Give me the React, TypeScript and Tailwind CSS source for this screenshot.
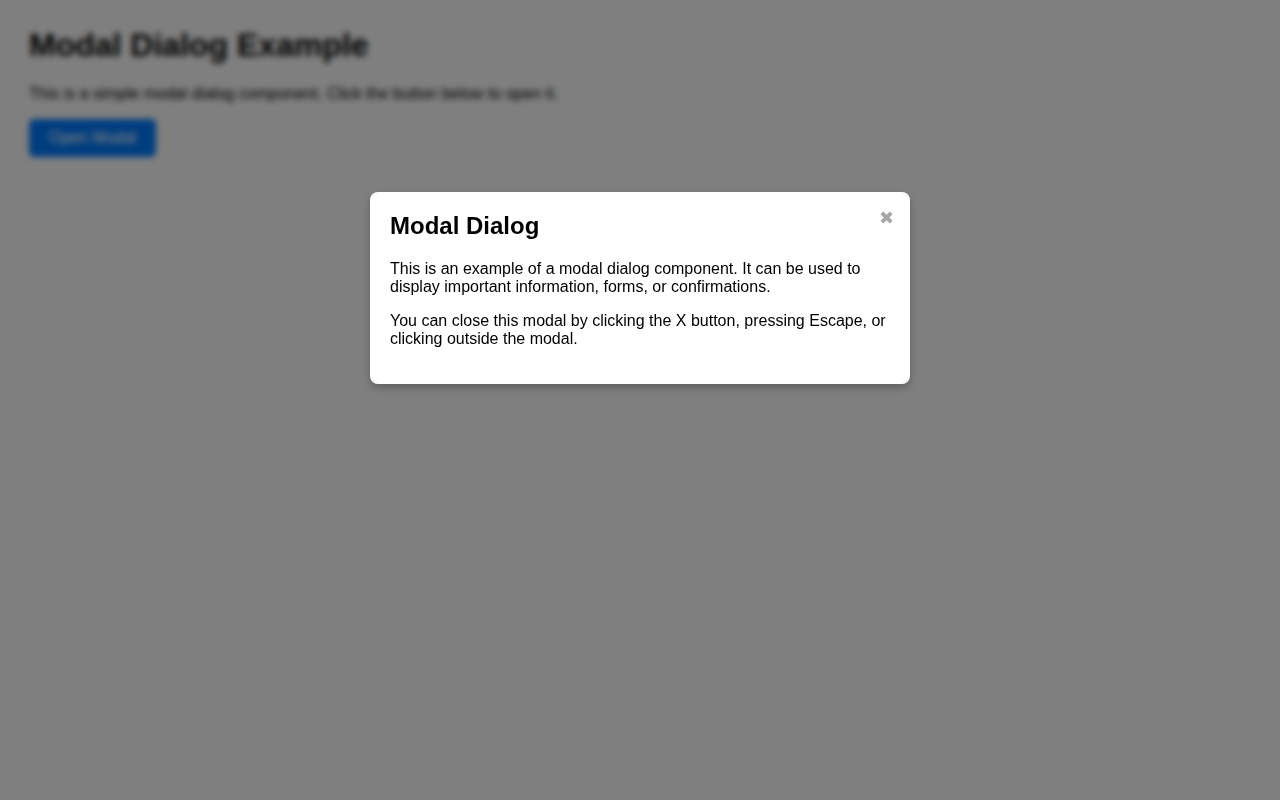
import React, { useEffect, useState } from 'react';

const sans = { fontFamily: '"Liberation Sans", Arial, sans-serif' };

export default function App() {
  const [open, setOpen] = useState(true);

  useEffect(() => {
    const onKey = (e: KeyboardEvent) => {
      if (e.key === 'Escape') setOpen(false);
    };
    window.addEventListener('keydown', onKey);
    return () => window.removeEventListener('keydown', onKey);
  }, []);

  return (
    <div className="relative min-h-screen bg-white text-black" style={sans}>
      {/* Page content */}
      <div className="px-[29px] pt-[27px]">
        <h1 className="mb-[21px] text-[32px] font-bold leading-[normal]">Modal Dialog Example</h1>
        <p className="mb-4 text-base leading-[normal]">
          This is a simple modal dialog component. Click the button below to open it.
        </p>
        <button
          onClick={() => setOpen(true)}
          className="rounded-[5px] bg-[#007bff] px-5 py-[10px] text-base leading-[normal] text-white"
        >
          Open Modal
        </button>
      </div>

      {/* Overlay + dialog */}
      {open && (
        <div
          className="fixed inset-0 flex items-start justify-center bg-black/50 pt-[192px] backdrop-blur-[3px]"
          onClick={() => setOpen(false)}
        >
          <div
            className="relative w-[540px] rounded-lg bg-white p-5 shadow-[0_4px_8px_rgba(0,0,0,0.25)]"
            onClick={(e) => e.stopPropagation()}
          >
            <button
              onClick={() => setOpen(false)}
              aria-label="Close"
              className="absolute right-[16px] top-[17px] text-[18px] leading-none text-[#a6a6a6]"
              style={{ fontFamily: '"DejaVu Sans", sans-serif' }}
            >
              ✖
            </button>
            <h2 className="mb-5 text-2xl font-bold leading-[normal]">Modal Dialog</h2>
            <p className="mb-4 text-base leading-[normal]">
              This is an example of a modal dialog component. It can be used to display important
              information, forms, or confirmations.
            </p>
            <p className="mb-4 text-base leading-[normal]">
              You can close this modal by clicking the X button, pressing Escape, or clicking
              outside the modal.
            </p>
          </div>
        </div>
      )}
    </div>
  );
}
